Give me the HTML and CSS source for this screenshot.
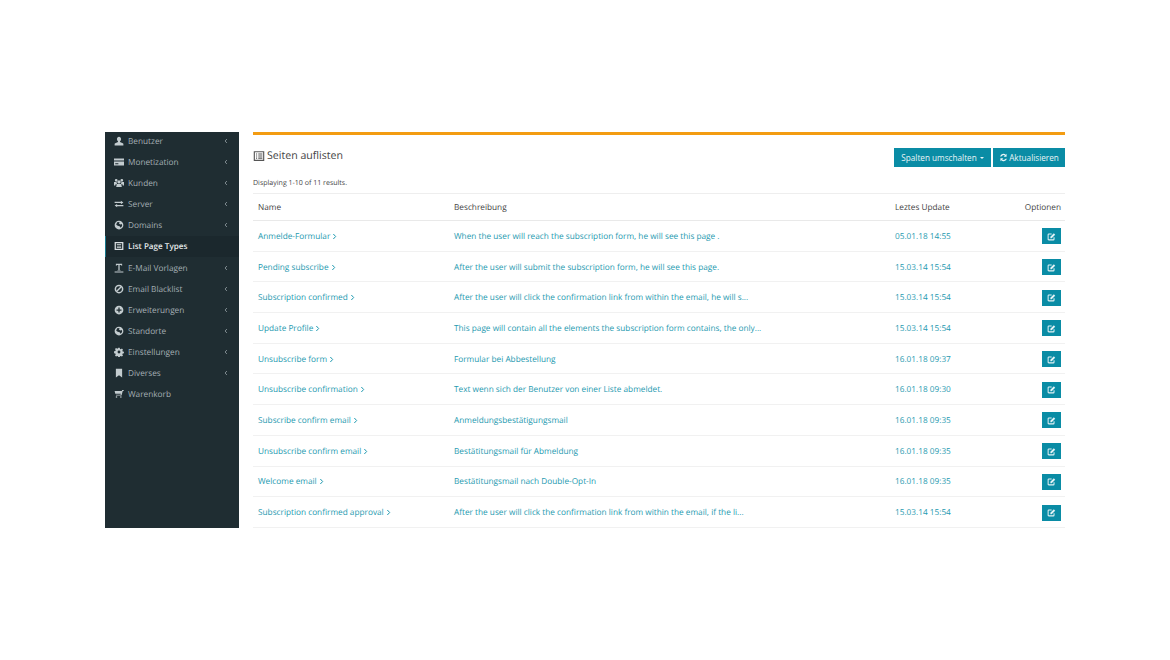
FILE: index.html
```html
<!DOCTYPE html>
<html lang="de">
<head>
<meta charset="utf-8">
<title>Seiten auflisten</title>
<link rel="stylesheet" href="styles.css">
</head>
<body>
<svg class="defs" width="0" height="0" aria-hidden="true">
  <symbol id="i-edit" viewBox="0 0 16 16"><path fill="none" stroke="currentColor" stroke-width="1.8" d="M12.5 9.5v3.2a1.3 1.3 0 0 1-1.3 1.3H3.3A1.3 1.3 0 0 1 2 12.7V4.8a1.3 1.3 0 0 1 1.3-1.3h5"/><path fill="currentColor" d="M6 8.6 12.2 2.4l2.4 2.4L8.4 11H6z"/></symbol>
  <symbol id="i-chev" viewBox="0 0 6 8"><path fill="none" stroke="currentColor" stroke-width="1.3" d="M4.4 1 1.6 4l2.8 3"/></symbol>
  <symbol id="i-gt" viewBox="0 0 6 8"><path fill="none" stroke="currentColor" stroke-width="1.2" d="M1.6 1 4.4 4 1.600 7"/></symbol>
  <symbol id="i-globe" viewBox="0 0 16 16"><circle cx="8" cy="8" r="7" fill="currentColor"/><path fill="#1f2d33" d="M5 3.5 9 3 8 5.5 10 7l2.5-.5.5 3-2.500 3-1.500-2.500L6 9 3.500 7.500z"/></symbol>
</svg>
<div class="page">
  <nav class="sidebar">
    <ul class="menu">
      <li class="item"><svg class="ico" viewBox="0 0 16 16"><path fill="currentColor" d="M8 1c2 0 3.300 1.600 3.300 3.800 0 1.600-.7 3-1.700 3.700v1.200l4.400 1.700c.6.3 1 .7 1 1.400V15H1v-2.200c0-.7.4-1.100 1-1.400l4.400-1.700V8.500c-1-.7-1.700-2.100-1.700-3.700C4.700 2.600 6 1 8 1z"/></svg><span class="label">Benutzer</span><svg class="chev"><use href="#i-chev"/></svg></li>
      <li class="item"><svg class="ico" viewBox="0 0 16 16"><path fill="currentColor" d="M0 2.500h16v3H0zM0 7h16v6.500H0zM2 10v1.500h5V10z" fill-rule="evenodd"/></svg><span class="label">Monetization</span><svg class="chev"><use href="#i-chev"/></svg></li>
      <li class="item"><svg class="ico" viewBox="0 0 16 16"><path fill="currentColor" d="M3.500 1.500a2.200 2.200 0 1 1 0 4.400 2.200 2.200 0 0 1 0-4.400zm9 0a2.200 2.200 0 1 1 0 4.400 2.200 2.200 0 0 1 0-4.400zM8 3.500a2.700 2.700 0 1 1 0 5.400 2.700 2.700 0 0 1 0-5.400zM0 6.500h4l1 3.500H2.500L2 12H0zm12 0h4V12h-2l-.5-2H11zM4.500 9.500h7l1 5h-9z"/></svg><span class="label">Kunden</span><svg class="chev"><use href="#i-chev"/></svg></li>
      <li class="item"><svg class="ico" viewBox="0 0 16 16"><path fill="currentColor" d="M1 4.500h10V2.800l4 2.700-4 2.700V6.500H1zM15 9.500H5V7.800l-4 2.700 4 2.700v-1.700h10z"/></svg><span class="label">Server</span><svg class="chev"><use href="#i-chev"/></svg></li>
      <li class="item"><svg class="ico"><use href="#i-globe"/></svg><span class="label">Domains</span><svg class="chev"><use href="#i-chev"/></svg></li>
      <li class="item active"><svg class="ico" viewBox="0 0 16 16"><path fill="currentColor" fill-rule="evenodd" d="M1 1.500h14v13H1zM3 3.500v9h10v-9zM4.500 5h7v1.300h-7zm0 2.400h7v1.300h-7zm0 2.400h7v1.300h-7z"/></svg><span class="label">List Page Types</span></li>
      <li class="item"><svg class="ico" viewBox="0 0 16 16"><path fill="currentColor" d="M3 1h10v3.500h-1L11.500 3H9v8h1.500v1h-5v-1H7V3H4.500L4 4.500H3zM1 13.500h14V15H1z"/></svg><span class="label">E-Mail Vorlagen</span><svg class="chev"><use href="#i-chev"/></svg></li>
      <li class="item"><svg class="ico" viewBox="0 0 16 16"><circle cx="8" cy="8" r="5.800" fill="none" stroke="currentColor" stroke-width="2.400"/><path stroke="currentColor" stroke-width="2.200" d="M4 12 12 4"/></svg><span class="label">Email Blacklist</span><svg class="chev"><use href="#i-chev"/></svg></li>
      <li class="item"><svg class="ico" viewBox="0 0 16 16"><path fill="currentColor" fill-rule="evenodd" d="M8 1a7 7 0 1 1 0 14A7 7 0 0 1 8 1zM7 4v3H4v2h3v3h2V9h3V7H9V4z"/></svg><span class="label">Erweiterungen</span><svg class="chev"><use href="#i-chev"/></svg></li>
      <li class="item"><svg class="ico"><use href="#i-globe"/></svg><span class="label">Standorte</span><svg class="chev"><use href="#i-chev"/></svg></li>
      <li class="item"><svg class="ico" viewBox="0 0 16 16"><path fill="currentColor" fill-rule="evenodd" d="M6.800 1h2.400l.4 2 1.300.6 1.800-1.100 1.700 1.700-1.100 1.800.6 1.300 2 .4v2.400l-2 .4-.6 1.300 1.100 1.800-1.700 1.700-1.800-1.100-1.300.6-.4 2H6.800l-.4-2-1.300-.6-1.800 1.100-1.700-1.700 1.100-1.800-.6-1.300-2-.4V6.800l2-.4.6-1.300L1.600 3.300l1.700-1.700 1.800 1.100 1.300-.6zM8 5.700a2.300 2.300 0 1 0 0 4.600 2.300 2.300 0 0 0 0-4.600z"/></svg><span class="label">Einstellungen</span><svg class="chev"><use href="#i-chev"/></svg></li>
      <li class="item"><svg class="ico" viewBox="0 0 16 16"><path fill="currentColor" d="M3 1h10v14l-5-3.500L3 15z"/></svg><span class="label">Diverses</span><svg class="chev"><use href="#i-chev"/></svg></li>
      <li class="item"><svg class="ico" viewBox="0 0 16 16"><path fill="currentColor" d="M1 3h11.500l.5-1.500h2.500V3H14l-2 7.500H3.500L3 9h7.500l.4-1.500H2zM4 11.500a1.300 1.300 0 1 1 0 2.600 1.300 1.300 0 0 1 0-2.600zm7 0a1.300 1.300 0 1 1 0 2.600 1.300 1.300 0 0 1 0-2.600z"/></svg><span class="label">Warenkorb</span></li>
    </ul>
  </nav>
  <main class="panel">
    <header class="panel-head">
      <h1 class="title"><svg class="title-ico" viewBox="0 0 16 16"><path fill="currentColor" fill-rule="evenodd" d="M1 1.500h14v13H1zM2.500 3v10h11V3zM4 4.500h1.500v1.500H4zm3 0h5.500v1.500H7zM4 7.300h1.500v1.500H4zm3 0h5.500v1.500H7zM4 10h1.500v1.500H4zm3 0h5.500v1.500H7z"/></svg>Seiten auflisten</h1>
      <div class="actions">
        <button class="btn btn-cols">Spalten umschalten <span class="caret"></span></button>
        <button class="btn btn-refresh"><svg class="refresh" viewBox="0 0 16 16"><path fill="currentColor" d="M13.500 1.500V6.500H8.500l1.900-1.900A4 4 0 0 0 4.300 6H2A6.200 6.200 0 0 1 12 3zM2.500 14.500V9.500h5L5.600 11.400A4 4 0 0 0 11.700 10H14A6.200 6.200 0 0 1 4 13z"/></svg>Aktualisieren</button>
      </div>
    </header>
    <p class="summary">Displaying 1-10 of 11 results.</p>
    <table class="grid">
      <thead>
        <tr><th class="c-name">Name</th><th class="c-desc">Beschreibung</th><th class="c-date">Leztes Update</th><th class="c-opt">Optionen</th></tr>
      </thead>
      <tbody>
        <tr><td><a>Anmelde-Formular<svg class="gt"><use href="#i-gt"/></svg></a></td><td><a>When the user will reach the subscription form, he will see this page .</a></td><td><a>05.01.18 14:55</a></td><td class="c-opt"><a class="edit"><svg><use href="#i-edit"/></svg></a></td></tr>
        <tr><td><a>Pending subscribe<svg class="gt"><use href="#i-gt"/></svg></a></td><td><a>After the user will submit the subscription form, he will see this page.</a></td><td><a>15.03.14 15:54</a></td><td class="c-opt"><a class="edit"><svg><use href="#i-edit"/></svg></a></td></tr>
        <tr><td><a>Subscription confirmed<svg class="gt"><use href="#i-gt"/></svg></a></td><td><a>After the user will click the confirmation link from within the email, he will s...</a></td><td><a>15.03.14 15:54</a></td><td class="c-opt"><a class="edit"><svg><use href="#i-edit"/></svg></a></td></tr>
        <tr><td><a>Update Profile<svg class="gt"><use href="#i-gt"/></svg></a></td><td><a>This page will contain all the elements the subscription form contains, the only...</a></td><td><a>15.03.14 15:54</a></td><td class="c-opt"><a class="edit"><svg><use href="#i-edit"/></svg></a></td></tr>
        <tr><td><a>Unsubscribe form<svg class="gt"><use href="#i-gt"/></svg></a></td><td><a>Formular bei Abbestellung</a></td><td><a>16.01.18 09:37</a></td><td class="c-opt"><a class="edit"><svg><use href="#i-edit"/></svg></a></td></tr>
        <tr><td><a>Unsubscribe confirmation<svg class="gt"><use href="#i-gt"/></svg></a></td><td><a>Text wenn sich der Benutzer von einer Liste abmeldet.</a></td><td><a>16.01.18 09:30</a></td><td class="c-opt"><a class="edit"><svg><use href="#i-edit"/></svg></a></td></tr>
        <tr><td><a>Subscribe confirm email<svg class="gt"><use href="#i-gt"/></svg></a></td><td><a>Anmeldungsbestätigungsmail</a></td><td><a>16.01.18 09:35</a></td><td class="c-opt"><a class="edit"><svg><use href="#i-edit"/></svg></a></td></tr>
        <tr><td><a>Unsubscribe confirm email<svg class="gt"><use href="#i-gt"/></svg></a></td><td><a>Bestätitungsmail für Abmeldung</a></td><td><a>16.01.18 09:35</a></td><td class="c-opt"><a class="edit"><svg><use href="#i-edit"/></svg></a></td></tr>
        <tr><td><a>Welcome email<svg class="gt"><use href="#i-gt"/></svg></a></td><td><a>Bestätitungsmail nach Double-Opt-In</a></td><td><a>16.01.18 09:35</a></td><td class="c-opt"><a class="edit"><svg><use href="#i-edit"/></svg></a></td></tr>
        <tr><td><a>Subscription confirmed approval<svg class="gt"><use href="#i-gt"/></svg></a></td><td><a>After the user will click the confirmation link from within the email, if the li...</a></td><td><a>15.03.14 15:54</a></td><td class="c-opt"><a class="edit"><svg><use href="#i-edit"/></svg></a></td></tr>
      </tbody>
    </table>
  </main>
</div>
</body>
</html>
```
FILE: styles.css
```css
* { box-sizing: border-box; }
html, body { margin: 0; padding: 0; background: #fff; }
body { font-family: "Open Sans", "Liberation Sans", sans-serif; font-size: 8.25px; color: #333; text-rendering: geometricPrecision; }
.defs { position: absolute; }
.page { display: flex; gap: 14px; width: 1065px; height: 660px; padding: 132px 0 132px 105px; }

.sidebar { width: 134px; flex: none; background: #1f2d32; overflow: hidden; }
.menu { list-style: none; margin: -1.6px 0 0; padding: 0; }
.item { display: flex; align-items: center; height: 21.1px; padding: 0 9px; color: #a3aeb2; font-size: 8.25px; }
.item.active { background: #1b282d; color: #e6ebec; font-weight: 600; font-size: 8.1px; box-shadow: inset 1px 0 0 #17788c; }
.ico { width: 10px; height: 10px; margin-right: 4px; flex: none; color: #c3cccf; }
.item.active .ico { color: #d9dfe1; }
.label { flex: 1; white-space: nowrap; padding-top: 1px; }
.chev { width: 4px; height: 6px; flex: none; color: #8c989c; margin-right: 2px; }

.panel { width: 812px; flex: none; border-top: 3px solid #f39c12; }
.panel-head { display: flex; justify-content: space-between; height: 33px; padding-top: 11px; }
.title { display: flex; align-items: center; margin: 0; height: 20px; font-size: 10.6px; font-weight: 400; color: #444; }
.title-ico { width: 12px; height: 12px; margin-right: 2px; color: #555; }
.actions { display: flex; gap: 2px; padding-top: 2px; }
.btn { display: flex; align-items: center; height: 19px; border: 0; padding: 0; background: #0a8ca5; color: #e9f4f6; font: 400 8.2px "Open Sans", "Liberation Sans", sans-serif; justify-content: center; }
.btn-cols { width: 97px; }
.btn-refresh { width: 72px; }
.caret { display: inline-block; margin-left: 3px; border: 2.500px solid transparent; border-top-color: #e9f4f6; border-bottom: 0; }
.refresh { width: 9px; height: 9px; margin-right: 1px; }

.summary { margin: 0; height: 25px; padding-top: 10px; font-size: 7.05px; line-height: 11px; color: #444; }

.grid { width: 812px; border-collapse: collapse; table-layout: fixed; border-top: 1px solid #eee; }
.grid th { height: 27px; padding: 1px 5px 0; font-weight: 400; text-align: left; color: #444; border-bottom: 1px solid #e9e9e9; }
.grid td { height: 30.700px; padding: 1px 5px 0; color: #1f9ab0; border-bottom: 1px solid #f1f1f1; white-space: nowrap; }
.c-name { width: 196px; }
.c-desc { width: 441px; }
.c-date { width: 100px; }
.grid .c-opt { text-align: right; padding-right: 4px; }
.gt { width: 5px; height: 7px; margin-left: 2px; vertical-align: -1px; }
.edit { display: inline-flex; align-items: center; justify-content: center; width: 19px; height: 16px; background: #0a8ca5; color: #e4f2f5; vertical-align: middle; }
.edit svg { width: 9px; height: 9px; }
```
